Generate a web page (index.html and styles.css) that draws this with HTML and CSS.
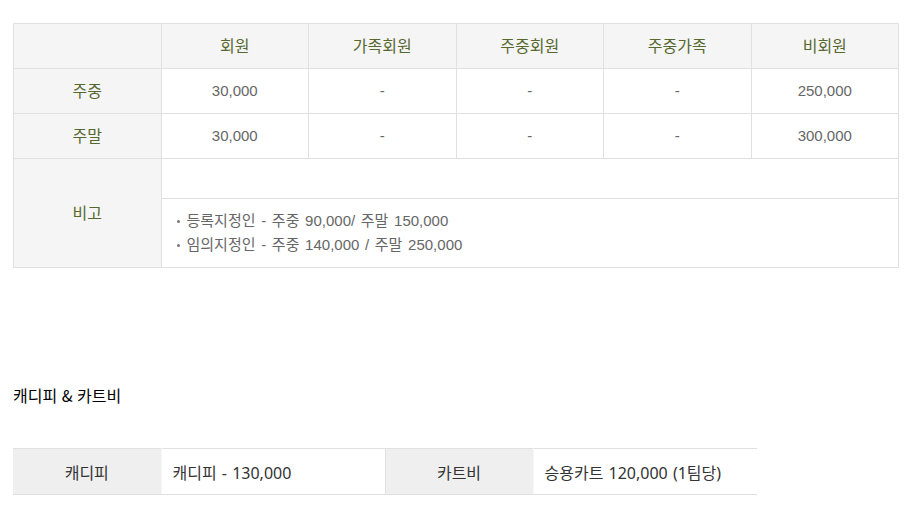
FILE: index.html
```html
<!DOCTYPE html>
<html lang="ko">
<head>
<meta charset="utf-8">
<link rel="stylesheet" href="styles.css">
</head>
<body>
<div class="page">
  <table class="fee">
    <colgroup><col><col><col><col><col><col></colgroup>
    <thead>
      <tr>
        <th class="corner"></th>
        <th>회원</th>
        <th>가족회원</th>
        <th>주중회원</th>
        <th>주중가족</th>
        <th>비회원</th>
      </tr>
    </thead>
    <tbody>
      <tr>
        <th>주중</th>
        <td>30,000</td>
        <td>-</td>
        <td>-</td>
        <td>-</td>
        <td>250,000</td>
      </tr>
      <tr>
        <th>주말</th>
        <td>30,000</td>
        <td>-</td>
        <td>-</td>
        <td>-</td>
        <td>300,000</td>
      </tr>
      <tr>
        <th rowspan="2">비고</th>
        <td colspan="5" class="empty"></td>
      </tr>
      <tr>
        <td colspan="5" class="notes">
          <ul class="note-list">
            <li>등록지정인 - 주중 90,000/ 주말 150,000</li>
            <li>임의지정인 - 주중 140,000 / 주말 250,000</li>
          </ul>
        </td>
      </tr>
    </tbody>
  </table>

  <h3 class="section-title">캐디피 &amp; 카트비</h3>

  <table class="extra">
    <colgroup>
      <col class="c-head"><col class="c-val"><col class="c-head"><col class="c-val">
    </colgroup>
    <tr>
      <th>캐디피</th>
      <td>캐디피 - 130,000</td>
      <th>카트비</th>
      <td class="last">승용카트 120,000 (1팀당)</td>
    </tr>
  </table>
</div>
</body>
</html>
```

FILE: styles.css
```css
html, body {
  margin: 0;
  padding: 0;
  background: #fff;
}

.page {
  padding: 23px 13px 0 13px;
  font-family: "Liberation Sans", "Noto Sans CJK KR", sans-serif;
}

.fee {
  width: 886px;
  border-collapse: collapse;
  table-layout: fixed;
  font-size: 15px;
}

.fee th,
.fee td {
  border: 1px solid #e0e0e0;
  text-align: center;
  height: 42px;
  padding: 0 0 2px 0;
  font-weight: normal;
}

.fee th {
  background: #f5f5f5;
  color: #55682f;
  font-family: "Noto Sans CJK KR", sans-serif;
  font-size: 16px;
}

.fee td {
  color: #666;
  background: #fff;
}

.fee td.empty {
  height: 39px;
  padding: 0;
}

.fee td.notes {
  text-align: left;
  height: 68px;
  padding: 0 14px;
  font-size: 15px;
  word-spacing: 1.5px;
}

.note-list {
  list-style: none;
  margin: 0;
  padding: 0;
  line-height: 24px;
}

.note-list li {
  display: flex;
  align-items: center;
}

.note-list li::before {
  content: "";
  width: 3px;
  height: 3px;
  border-radius: 50%;
  background: #777;
  margin: 0 7px 0 1px;
}

.section-title {
  margin: 116px 0 0 0;
  font-family: "Noto Sans CJK KR", "Noto Sans", sans-serif;
  font-size: 16px;
  font-weight: 400;
  line-height: 22px;
  color: #000;
}

.extra {
  margin-top: 42px;
  border-collapse: collapse;
  table-layout: fixed;
  width: 744px;
  font-family: "Noto Sans", "Noto Sans CJK KR", sans-serif;
  font-size: 16px;
  color: #333;
}

.extra .c-head {
  width: 148px;
}

.extra .c-val {
  width: 224px;
}

.extra th,
.extra td {
  height: 45px;
  padding: 0;
  border-top: 1px solid #e0e0e0;
  border-bottom: 1px solid #e0e0e0;
}

.extra th {
  background: #efefef;
  font-weight: normal;
  text-align: center;
  border-right: 1px solid #f7f7f7;
}

.extra td {
  text-align: left;
  padding-left: 11px;
  background: #fff;
  border-right: 1px solid #e0e0e0;
  word-spacing: 1px;
}

.extra td.last {
  border-right: none;
}
```
